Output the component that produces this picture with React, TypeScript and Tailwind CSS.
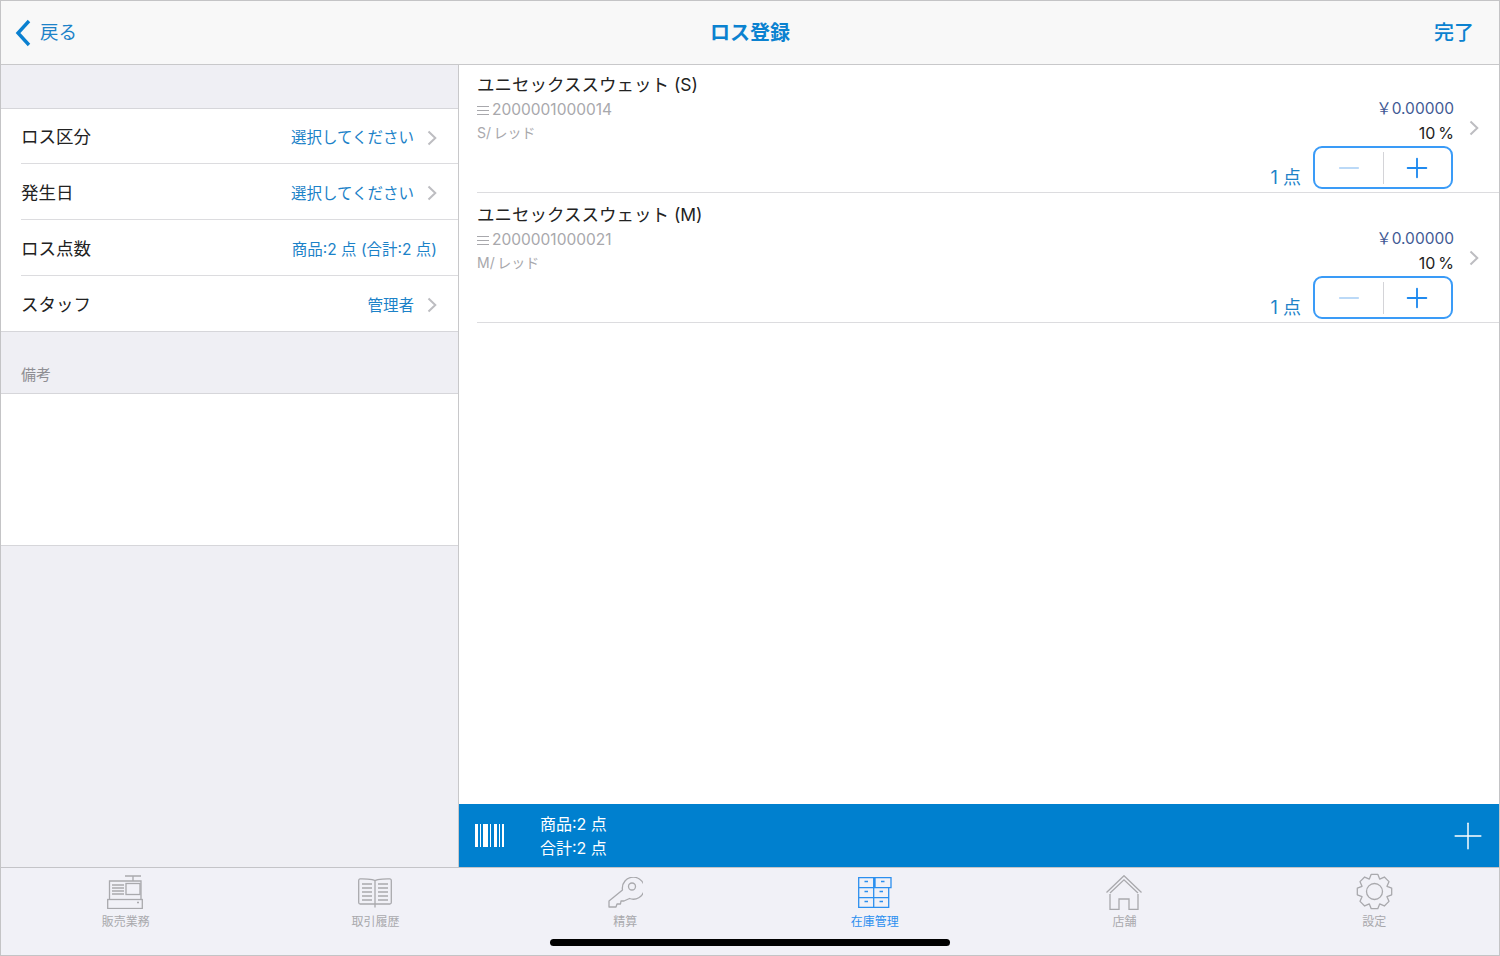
import { Plus, Minus } from "lucide-react";

const font = { fontFamily: '"Inter", "Noto Sans CJK JP", sans-serif' };

const rows = [
  { label: "ロス区分", value: "選択してください", arrow: true, height: "h-[55px]" },
  { label: "発生日", value: "選択してください", arrow: true, height: "h-[56px]" },
  { label: "ロス点数", value: "商品:2 点 (合計:2 点)", arrow: false, height: "h-[56px]" },
  { label: "スタッフ", value: "管理者", arrow: true, height: "h-[55px]" },
];

const items = [
  { name: "ユニセックススウェット (S)", code: "2000001000014", variant: "S/\u2009レッド" },
  { name: "ユニセックススウェット (M)", code: "2000001000021", variant: "M/\u2009レッド" },
];

// 8 tooth gear outline for the settings tab
const gearPath = () => {
  const pts: string[] = [];
  for (let i = 0; i < 8; i++) {
    const a = (i * Math.PI) / 4 - Math.PI / 2;
    const step = Math.PI / 4;
    const pairs: [number, number][] = [
      [-0.5, 13.5],
      [-0.24, 17.5],
      [0.24, 17.5],
      [0.5, 13.5],
    ];
    pairs.forEach(([t, r]) => {
      const x = 18.5 + r * Math.cos(a + t * step);
      const y = 18.5 + r * Math.sin(a + t * step);
      pts.push(`${x.toFixed(2)} ${y.toFixed(2)}`);
    });
  }
  return `M${pts.join("L")}Z`;
};

const RegisterIcon = () => (
  <svg width="36" height="34" viewBox="0 0 36 34" fill="none" stroke="#a9a9ad" strokeWidth="1.300">
    <path d="M18 1h16M26 1v5" />
    <path d="M2.500 24V6h31.500v18" />
    <rect x="19" y="8.500" width="14" height="11" />
    <path d="M5 10h12M5 13h12M5 16h12M5 19h12" />
    <rect x="0.700" y="24.500" width="34.600" height="9" />
    <path d="M30 27.500h2" />
  </svg>
);

const BookIcon = () => (
  <svg width="34" height="30" viewBox="0 0 34 30" fill="none" stroke="#a9a9ad" strokeWidth="1.300">
    <path d="M17 2.500C14 1 5 .700 2 .900 1 1 .700 1.500 .700 2.500v22c0 1 .500 1.500 1.500 1.500H17h14.800c1 0 1.500-.500 1.500-1.500v-22c0-1-.300-1.500-1.300-1.600-3-.200-12 .100-15 1.600z" />
    <path d="M17 2.500V29.500" />
    <path d="M4 6h10M4 10h10M4 14h10M4 18h10M4 22h10M20 6h10M20 10h10M20 14h10M20 18h10M20 22h10" />
  </svg>
);

const KeyIcon = () => (
  <svg width="35" height="31" viewBox="0 0 35 31" fill="none" stroke="#a9a9ad" strokeWidth="1.300" strokeLinejoin="round">
    <path d="M14.500 13a11 11 0 1 1 7 8.500L16 24h-3l-.500 3H9l-1 3H1v-6z" />
    <circle cx="24" cy="9.500" r="3.500" />
  </svg>
);

const DrawerIcon = () => (
  <svg width="34" height="31" viewBox="0 0 34 31" fill="none" stroke="#2b8fef" strokeWidth="1.300">
    <path d="M.700 .700h15v10h-15zM17 .700h16v10H17zM.700 10.700h15v10h-15zM15.700 10.700h15v10h-15zM.700 20.700h15v9.600h-15zM15.700 20.700h15v9.600h-15z" />
    <path d="M6.500 4.500h3.500M23 4.500h3.500M6.500 14.500h3.500M21.500 14.500h3.500M6.500 24.500h3.500M21.500 24.500h3.500" strokeWidth="1.500" />
  </svg>
);

const HomeIcon = () => (
  <svg width="36" height="35" viewBox="0 0 36 35" fill="none" stroke="#a9a9ad" strokeWidth="1.300">
    <path d="M.500 17.500L18 .700l17.500 16.800" />
    <path d="M4 19V34.300h9V24h10v10.300h9V19" />
    <path d="M4 18L18 4.800 32 18" />
  </svg>
);

const GearIcon = () => (
  <svg width="37" height="37" viewBox="0 0 37 37" fill="none" stroke="#a9a9ad" strokeWidth="1.300" strokeLinejoin="round">
    <path d={gearPath()} />
    <circle cx="18.500" cy="18.500" r="8" />
  </svg>
);

const Chevron = ({ className }: { className?: string }) => (
  <svg width="10" height="16" viewBox="0 0 10 16" fill="none" stroke="#bdbdc1" strokeWidth="2" className={className}>
    <path d="M1.500 1.500L8.300 8l-6.800 6.500" />
  </svg>
);

const BarcodeIcon = () => (
  <div className="flex items-stretch h-[23px] w-[29px] justify-between">
    <div className="w-[3px] bg-white" />
    <div className="w-[1px] bg-white" />
    <div className="w-[5px] bg-white" />
    <div className="w-[1px] bg-white" />
    <div className="w-[3px] bg-white" />
    <div className="w-[1px] bg-white" />
    <div className="w-[2px] bg-white" />
  </div>
);

const tabs = [
  { label: "販売業務", icon: <RegisterIcon />, iconBox: "pb-[4px] pr-[2px]" },
  { label: "取引履歴", icon: <BookIcon />, iconBox: "pb-[5px]" },
  { label: "精算", icon: <KeyIcon />, iconBox: "pb-[5px]" },
  { label: "在庫管理", icon: <DrawerIcon />, iconBox: "pb-[5px]", active: true },
  { label: "店舗", icon: <HomeIcon />, iconBox: "pb-[3px]" },
  { label: "設定", icon: <GearIcon />, iconBox: "pb-[3px]" },
];

const SettingRow = ({ label, value, arrow, height, last }: { label: string; value: string; arrow: boolean; height: string; last: boolean }) => (
  <div className={`pl-[20px] ${height}`}>
    <div className={`h-full flex items-center justify-between pr-[21px] pt-[3px] ${last ? "" : "border-b border-[#dcdcdf]"}`}>
      <span className="text-[17.500px] text-[#222222]">{label}</span>
      <div className="flex items-center">
        <span className="text-[15.500px] text-[#1c82c8] mt-[1px]">{value}</span>
        {arrow && <Chevron className="ml-[13px]" />}
      </div>
    </div>
  </div>
);

const ItemRow = ({ name, code, variant }: { name: string; code: string; variant: string }) => (
  <div className="pl-[18px] h-[130px]">
    <div className="relative h-full border-b border-[#dcdcdf]">
      <div className="text-[17.500px] leading-[25px] pt-[9px] pb-[1px] text-[#222222]">{name}</div>
      <div className="flex items-center gap-[3px] h-[24px] text-[15.500px] text-[#a8a8ac]">
        <div className="w-[12px] h-[9px] border-y border-[#a8a8ac] flex items-center">
          <div className="w-full h-[1px] bg-[#a8a8ac]" />
        </div>
        <span>{code}</span>
      </div>
      <div className="text-[14px] leading-[24px] mt-[-1px] text-[#a8a8ac]">{variant}</div>
      <div className="absolute right-[45px] top-[34px] text-right">
        <div className="text-[15.500px] leading-[24px] text-[#3f5a94]">￥0.00000</div>
        <div className="text-[16px] leading-[24px] text-[#222222]">10{"\u2009"}%</div>
      </div>
      <Chevron className="absolute right-[20px] top-[57px]" />
      <div className="absolute right-[46px] top-[83px] flex items-end gap-[12px]">
        <span className="text-[18px] leading-[24px] text-[#1c82c8] mb-[-1px]">1 点</span>
        <div className="w-[140px] h-[43px] border-[2px] border-[#3a9bf7] rounded-[9px] flex items-center">
          <div className="flex-1 flex justify-center">
            <Minus className="w-[32px] h-[32px] text-[#a5cdf5]" strokeWidth={1.100} />
          </div>
          <div className="w-[1px] h-[32px] bg-[#d4d4d8]" />
          <div className="flex-1 flex justify-center">
            <Plus className="w-[32px] h-[32px] text-[#1f8aef]" strokeWidth={1.400} />
          </div>
        </div>
      </div>
    </div>
  </div>
);

export default function App() {
  return (
    <div style={font} className="w-[1500px] h-[956px] flex flex-col overflow-hidden bg-[#efeff4] border border-[#c4c4c6]">
      <header className="h-[64px] shrink-0 bg-[#f8f8f8] border-b border-[#c8c8ca] flex items-center justify-between pl-[13px] pr-[25px]">
        <div className="w-[212px] flex items-center gap-[7px]">
          <svg width="19" height="28" viewBox="0 0 19 28" fill="none" stroke="#0a80d0" strokeWidth="3.400">
            <path d="M15 2L4 14l11 12" />
          </svg>
          <span className="text-[18.500px] text-[#1c82c8]">戻る</span>
        </div>
        <h1 className="text-[20px] font-semibold text-[#0b82d0]">ロス登録</h1>
        <div className="w-[200px] text-right text-[20px] font-medium text-[#0b82d0]">完了</div>
      </header>

      <main className="flex-1 flex min-h-0">
        <aside className="w-[457px] shrink-0 pt-[43px]">
          <div className="bg-white border-y border-[#d6d6da]">
            {rows.map((row, i) => (
              <SettingRow key={row.label} {...row} last={i === rows.length - 1} />
            ))}
          </div>
          <div className="h-[61px] flex items-end pl-[20px] pb-[7px] text-[15px] text-[#8e8e93]">備考</div>
          <div className="h-[153px] bg-white border-y border-[#d6d6da]" />
        </aside>

        <section className="flex-1 flex flex-col bg-white border-l border-[#c8c8ca]">
          <div className="flex-1 mt-[-2px]">
            {items.map((item) => (
              <ItemRow key={item.code} {...item} />
            ))}
          </div>
          <div className="h-[63px] shrink-0 bg-[#0080cf] flex items-center pl-[16px] pr-[9px] text-white">
            <BarcodeIcon />
            <div className="ml-[36px] text-[16px] leading-[24px]">
              <div>商品:2 点</div>
              <div>合計:2 点</div>
            </div>
            <Plus className="ml-auto w-[44px] h-[44px]" strokeWidth={0.800} />
          </div>
        </section>
      </main>

      <nav className="relative h-[88px] shrink-0 bg-[#f1f1f7] border-t border-[#c4c4c8] grid grid-cols-6">
        {tabs.map((tab) => (
          <div key={tab.label} className="flex flex-col items-center">
            <div className={`h-[45px] flex items-end justify-center ${tab.iconBox}`}>{tab.icon}</div>
            <span className={`text-[12px] leading-[18px] ${tab.active ? "text-[#2b8fef]" : "text-[#a9a9ad]"}`}>
              {tab.label}
            </span>
          </div>
        ))}
        <div className="absolute left-[549px] bottom-[9px] w-[400px] h-[7px] rounded-full bg-black" />
      </nav>
    </div>
  );
}
